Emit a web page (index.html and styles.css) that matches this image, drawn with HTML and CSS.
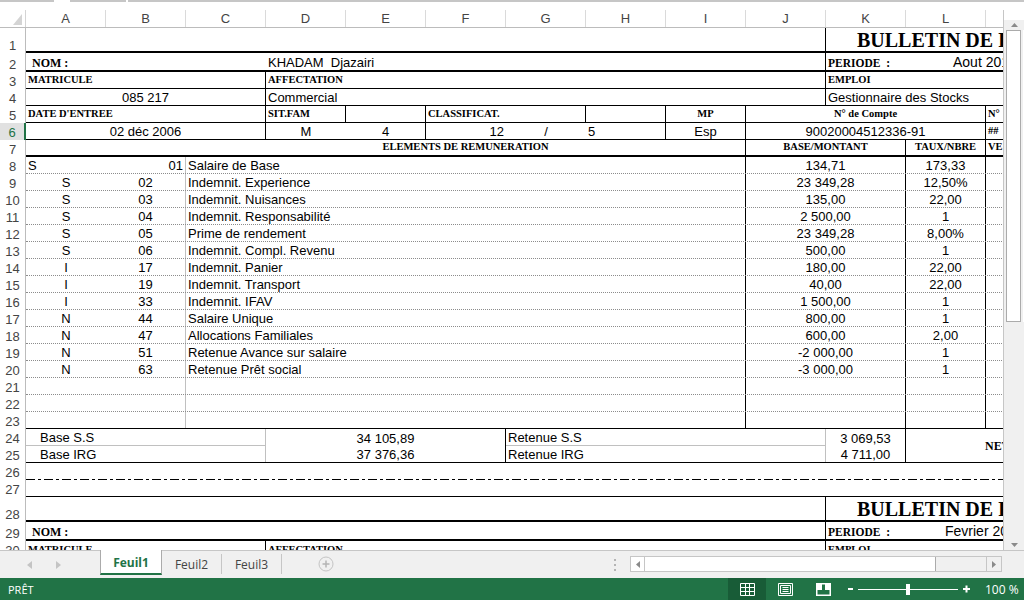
FILE: index.html
```
<!DOCTYPE html>
<html lang="fr">
<head>
<meta charset="UTF-8">
<title>Bulletin de paie - Feuil1</title>
<link rel="stylesheet" href="styles.css">
</head>
<body>
<div class="topbar"><span class="seg s-a"></span><span class="seg s-b"></span><span class="seg s-c"></span></div>

<div class="main">
  <div class="sheet">
    <div class="colhead">
      <div class="corner"><svg width="9" height="11" viewBox="0 0 9 11"><path d="M9 0V11H0z" fill="#d4d4d4"/></svg></div>
      <div class="ch">A</div><div class="ch">B</div><div class="ch">C</div><div class="ch">D</div>
      <div class="ch">E</div><div class="ch">F</div><div class="ch">G</div><div class="ch">H</div>
      <div class="ch">I</div><div class="ch">J</div><div class="ch">K</div><div class="ch">L</div>
      <div class="ch"></div>
    </div>

    <div class="row h25"><div class="rh">1</div><div class="cells bb2"><div class="c s10 br"></div><div class="c s3 title">BULLETIN DE PAIE</div></div></div>
    <div class="row h19"><div class="rh">2</div><div class="cells bb2"><div class="c s3 lbl nom">NOM :</div><div class="c s7 br">KHADAM  Djazairi</div><div class="c lb per">PERIODE  :</div><div class="c s2 big mois">Aout 2016</div></div></div>
    <div class="row"><div class="rh">3</div><div class="cells bb1"><div class="c s3 lb br">MATRICULE</div><div class="c s7 lb br">AFFECTATION</div><div class="c s3 lb">EMPLOI</div></div></div>
    <div class="row"><div class="rh">4</div><div class="cells bb1"><div class="c s3 br ctr">085 217</div><div class="c s7 br">Commercial</div><div class="c s3">Gestionnaire des Stocks</div></div></div>
    <div class="row"><div class="rh">5</div><div class="cells bb1"><div class="c s3 lb br">DATE D'ENTREE</div><div class="c lb br">SIT.FAM</div><div class="c br"></div><div class="c s2 lb br">CLASSIFICAT.</div><div class="c br"></div><div class="c lb br ctr">MP</div><div class="c s3 lb br ctr">N° de Compte</div><div class="c lb">N°</div></div></div>
    <div class="row"><div class="rh sel">6</div><div class="cells bb1"><div class="c s3 br ctr">02 déc 2006</div><div class="c ctr">M</div><div class="c br ctr">4</div><div class="c rt">12</div><div class="c ctr">/</div><div class="c br">5</div><div class="c br ctr">Esp</div><div class="c s3 br ctr">90020004512336-91</div><div class="c lb">##</div></div></div>
    <div class="row"><div class="rh">7</div><div class="cells bb2"><div class="c s2"></div><div class="c s7 lb br ctr">ELEMENTS DE REMUNERATION</div><div class="c s2 lb br ctr">BASE/MONTANT</div><div class="c lb br ctr">TAUX/NBRE</div><div class="c lb">VE</div></div></div>

    <div class="row"><div class="rh">8</div><div class="cells bbd"><div class="c">S</div><div class="c brg rt">01</div><div class="c s7 br">Salaire de Base</div><div class="c s2 br ctr">134,71</div><div class="c br ctr">173,33</div><div class="c"></div></div></div>
    <div class="row"><div class="rh">9</div><div class="cells bbd"><div class="c ctr">S</div><div class="c brg ctr">02</div><div class="c s7 br">Indemnit. Experience</div><div class="c s2 br ctr">23 349,28</div><div class="c br ctr">12,50%</div><div class="c"></div></div></div>
    <div class="row"><div class="rh">10</div><div class="cells bbd"><div class="c ctr">S</div><div class="c brg ctr">03</div><div class="c s7 br">Indemnit. Nuisances</div><div class="c s2 br ctr">135,00</div><div class="c br ctr">22,00</div><div class="c"></div></div></div>
    <div class="row"><div class="rh">11</div><div class="cells bbd"><div class="c ctr">S</div><div class="c brg ctr">04</div><div class="c s7 br">Indemnit. Responsabilité</div><div class="c s2 br ctr">2 500,00</div><div class="c br ctr">1</div><div class="c"></div></div></div>
    <div class="row"><div class="rh">12</div><div class="cells bbd"><div class="c ctr">S</div><div class="c brg ctr">05</div><div class="c s7 br">Prime de rendement</div><div class="c s2 br ctr">23 349,28</div><div class="c br ctr">8,00%</div><div class="c"></div></div></div>
    <div class="row"><div class="rh">13</div><div class="cells bbd"><div class="c ctr">S</div><div class="c brg ctr">06</div><div class="c s7 br">Indemnit. Compl. Revenu</div><div class="c s2 br ctr">500,00</div><div class="c br ctr">1</div><div class="c"></div></div></div>
    <div class="row"><div class="rh">14</div><div class="cells bbd"><div class="c ctr">I</div><div class="c brg ctr">17</div><div class="c s7 br">Indemnit. Panier</div><div class="c s2 br ctr">180,00</div><div class="c br ctr">22,00</div><div class="c"></div></div></div>
    <div class="row"><div class="rh">15</div><div class="cells bbd"><div class="c ctr">I</div><div class="c brg ctr">19</div><div class="c s7 br">Indemnit. Transport</div><div class="c s2 br ctr">40,00</div><div class="c br ctr">22,00</div><div class="c"></div></div></div>
    <div class="row"><div class="rh">16</div><div class="cells bbd"><div class="c ctr">I</div><div class="c brg ctr">33</div><div class="c s7 br">Indemnit. IFAV</div><div class="c s2 br ctr">1 500,00</div><div class="c br ctr">1</div><div class="c"></div></div></div>
    <div class="row"><div class="rh">17</div><div class="cells bbd"><div class="c ctr">N</div><div class="c brg ctr">44</div><div class="c s7 br">Salaire Unique</div><div class="c s2 br ctr">800,00</div><div class="c br ctr">1</div><div class="c"></div></div></div>
    <div class="row"><div class="rh">18</div><div class="cells bbd"><div class="c ctr">N</div><div class="c brg ctr">47</div><div class="c s7 br">Allocations Familiales</div><div class="c s2 br ctr">600,00</div><div class="c br ctr">2,00</div><div class="c"></div></div></div>
    <div class="row"><div class="rh">19</div><div class="cells bbd"><div class="c ctr">N</div><div class="c brg ctr">51</div><div class="c s7 br">Retenue Avance sur salaire</div><div class="c s2 br ctr">-2 000,00</div><div class="c br ctr">1</div><div class="c"></div></div></div>
    <div class="row"><div class="rh">20</div><div class="cells bbd"><div class="c ctr">N</div><div class="c brg ctr">63</div><div class="c s7 br">Retenue Prêt social</div><div class="c s2 br ctr">-3 000,00</div><div class="c br ctr">1</div><div class="c"></div></div></div>
    <div class="row"><div class="rh">21</div><div class="cells bbd"><div class="c"></div><div class="c brg"></div><div class="c s7 br"></div><div class="c s2 br"></div><div class="c br"></div><div class="c"></div></div></div>
    <div class="row"><div class="rh">22</div><div class="cells bbd"><div class="c"></div><div class="c brg"></div><div class="c s7 br"></div><div class="c s2 br"></div><div class="c br"></div><div class="c"></div></div></div>
    <div class="row"><div class="rh">23</div><div class="cells bb1"><div class="c"></div><div class="c brg"></div><div class="c s7 br"></div><div class="c s2 br"></div><div class="c br"></div><div class="c"></div></div></div>

    <div class="row h34">
      <div class="rhs"><div class="rh">24</div><div class="rh">25</div></div>
      <div class="cells two bb1">
        <div class="c s3 brg bbg ind">Base S.S</div>
        <div class="c s3 br ctr">34 105,89</div>
        <div class="c s4 brg bbg">Retenue S.S</div>
        <div class="c br ctr">3 069,53</div>
        <div class="c s2 r2 lbl net">NET A PAYER</div>
        <div class="c s3 brg ind">Base IRG</div>
        <div class="c s3 br ctr">37 376,36</div>
        <div class="c s4 brg">Retenue IRG</div>
        <div class="c br ctr">4 711,00</div>
      </div>
    </div>

    <div class="row"><div class="rh">26</div><div class="cells dashdot"></div></div>
    <div class="row"><div class="rh">27</div><div class="cells bb1"></div></div>
    <div class="row h25"><div class="rh">28</div><div class="cells bb2"><div class="c s10 br"></div><div class="c s3 title">BULLETIN DE PAIE</div></div></div>
    <div class="row h19"><div class="rh">29</div><div class="cells bb2"><div class="c s3 lbl nom">NOM :</div><div class="c s7 br"></div><div class="c lb per">PERIODE  :</div><div class="c s2 big feb">Fevrier 2016</div></div></div>
    <div class="row"><div class="rh">30</div><div class="cells"><div class="c s3 lb br">MATRICULE</div><div class="c s7 lb br">AFFECTATION</div><div class="c s3 lb">EMPLOI</div></div></div>
  </div>

  <div class="vscroll">
    <div class="vbtn"><svg width="7" height="4" viewBox="0 0 7 4"><path d="M0 4L3.5 0 7 4z" fill="#8a8a8a"/></svg></div>
    <div class="vthumb"></div>
    <div class="vtrack"></div>
    <div class="vbtn"><svg width="7" height="4" viewBox="0 0 7 4"><path d="M0 0L3.5 4 7 0z" fill="#8a8a8a"/></svg></div>
  </div>
</div>

<div class="tabs">
  <div class="nav">
    <svg width="5" height="8" viewBox="0 0 5 8"><path d="M5 0V8L0 4z" fill="#c4c4c4"/></svg>
    <svg width="5" height="8" viewBox="0 0 5 8"><path d="M0 0V8L5 4z" fill="#c4c4c4"/></svg>
  </div>
  <div class="tab on">Feuil1</div>
  <div class="tab">Feuil2</div>
  <div class="tab">Feuil3</div>
  <div class="add"><svg width="16" height="16" viewBox="0 0 16 16"><circle cx="8" cy="8" r="7" fill="none" stroke="#c4c4c4"/><path d="M8 4.5v7M4.5 8h7" stroke="#b4b4b4" stroke-width="1.5"/></svg></div>
  <div class="split"><svg width="2" height="12" viewBox="0 0 2 12"><rect y="0" width="2" height="2" fill="#b4b4b4"/><rect y="5" width="2" height="2" fill="#b4b4b4"/><rect y="10" width="2" height="2" fill="#b4b4b4"/></svg></div>
  <div class="hscroll">
    <div class="hbtn first"><svg width="4" height="7" viewBox="0 0 4 7"><path d="M4 0V7L0 3.5z" fill="#8a8a8a"/></svg></div>
    <div class="hthumb"></div>
    <div class="htrack"></div>
    <div class="hbtn"><svg width="4" height="7" viewBox="0 0 4 7"><path d="M0 0V7L4 3.5z" fill="#8a8a8a"/></svg></div>
  </div>
</div>

<div class="status">
  <span class="ready">PRÊT</span>
  <div class="views">
    <span class="vw on"><svg width="15" height="13" viewBox="0 0 15 13"><path d="M0.5 0.5h14v12h-14zM5.5 0.5v12M9.5 0.5v12M0.5 4.5h14M0.5 8.5h14" fill="none" stroke="#fff"/></svg></span>
    <span class="vw"><svg width="15" height="13" viewBox="0 0 15 13"><path d="M0.5 0.5h14v12h-14zM2.5 2.5h10v8h-10zM4.5 4.5h6M4.5 6.5h6M4.5 8.5h6" fill="none" stroke="#fff"/></svg></span>
    <span class="vw"><svg width="15" height="13" viewBox="0 0 15 13"><path d="M0.75 0.75h13.5v11.5h-13.5z" fill="none" stroke="#fff" stroke-width="1.5"/><rect x="1" y="1" width="5" height="6" fill="#fff"/><rect x="9" y="1" width="5" height="6" fill="#fff"/></svg></span>
  </div>
  <svg class="zoomer" width="128" height="22" viewBox="0 0 128 22">
    <rect x="0" y="10" width="5" height="2" fill="#fff"/>
    <rect x="10" y="11" width="100" height="1" fill="#fff"/>
    <rect x="58" y="6" width="4" height="11" fill="#fff"/>
    <rect x="115" y="10" width="7" height="2" fill="#fff"/>
    <rect x="117.5" y="7.5" width="2" height="7" fill="#fff"/>
  </svg>
  <span class="pct">100 %</span>
</div>
</body>
</html>
```

FILE: styles.css
```
* {
    margin: 0;
    padding: 0;
    box-sizing: border-box;
}
body {
    width: 1024px;
    height: 600px;
    overflow: hidden;
    background: #fff;
    font-family: "Liberation Sans", Arial, sans-serif;
    font-size: 13px;
    color: #000;
}

/* restes de la barre de formule */
.topbar {
    height: 10px;
    display: flex;
    align-items: flex-start;
}
.seg {
    height: 2px;
    background: #c6c6c6;
}
.s-a { width: 54px; }
.s-b { width: 56px; margin-left: 16px; }
.s-c { flex: 1; margin-left: 2px; }

.main {
    height: 540px;
    display: flex;
}
.sheet {
    width: 1003px;
    overflow: hidden;
}

/* en-tetes */
.colhead {
    display: grid;
    grid-template-columns: 26px repeat(12, 80px) 18px;
    height: 18px;
    border-bottom: 1px solid #bcbcbc;
    color: #444;
}
.corner {
    display: flex;
    align-items: flex-end;
    justify-content: flex-end;
    padding: 0 3px 2px 0;
    border-right: 1px solid #d4d4d4;
}
.ch {
    border-right: 1px solid #dadada;
    text-align: center;
    line-height: 17px;
}

.row {
    display: flex;
    height: 17px;
}
.h19 { height: 19px; }
.h25 { height: 25px; }
.h34 { height: 34px; }
.rh {
    width: 26px;
    flex: none;
    border-right: 1px solid #bcbcbc;
    color: #444;
    display: flex;
    align-items: flex-end;
    justify-content: center;
    line-height: 15px;
}
.rh.sel {
    background: #e1e1e1;
    color: #217346;
    border-right: 2px solid #217346;
}
.rhs {
    flex: none;
    display: flex;
    flex-direction: column;
}
.rhs .rh { height: 17px; }

.cells {
    flex: 1;
    display: grid;
    grid-template-columns: repeat(12, 80px) 18px;
}
.cells.two { grid-template-rows: 17px 16px; }
.bb1 { border-bottom: 1px solid #000; }
.bb2 { border-bottom: 2px solid #000; }
.bbd { border-bottom: 1px dotted #8c8c8c; }
.dashdot {
    background: repeating-linear-gradient(90deg, #000 0 9px, transparent 9px 12px, #000 12px 15px, transparent 15px 18px) left bottom / 100% 1px no-repeat;
}

/* cellules */
.c {
    display: flex;
    align-items: flex-end;
    padding: 0 2px;
    line-height: 15px;
    white-space: pre;
}
.s2 { grid-column: span 2; }
.s3 { grid-column: span 3; }
.s4 { grid-column: span 4; }
.s7 { grid-column: span 7; }
.s10 { grid-column: span 10; }
.r2 { grid-row: span 2; }
.ctr { justify-content: center; }
.rt { justify-content: flex-end; }
.br { border-right: 1px solid #000; }
.brg { border-right: 1px solid #c0c0c0; }
.bbg { border-bottom: 1px solid #c0c0c0; }
.ind { padding-left: 14px; }

.lb {
    font-family: "Liberation Serif", "Times New Roman", serif;
    font-weight: bold;
    font-size: 10.5px;
    line-height: 12px;
    padding-bottom: 2px;
}
.lbl {
    font-family: "Liberation Serif", "Times New Roman", serif;
    font-weight: bold;
    font-size: 12px;
    line-height: 14px;
}
.title {
    font-family: "Liberation Serif", "Times New Roman", serif;
    font-weight: bold;
    font-size: 20px;
    line-height: 22px;
    padding-left: 31px;
}
.nom { padding-left: 6px; }
.per {
    font-size: 11.5px;
    line-height: 14px;
    padding-bottom: 0;
}
.big {
    font-size: 14px;
    line-height: 16px;
}
.mois { padding-left: 47px; }
.feb { padding-left: 39px; }
.net {
    align-items: center;
    padding-left: 79px;
}

/* ascenseur vertical */
.vscroll {
    flex: 1;
    display: flex;
    flex-direction: column;
    padding-top: 10px;
    border-left: 1px solid #c6c6c6;
}
.vbtn {
    height: 10px;
    display: flex;
    align-items: center;
    justify-content: center;
    background: #f0f0f0;
}
.vthumb {
    height: 292px;
    background: #fff;
    border: 1px solid #ababab;
    box-shadow: 0 0 0 2px #f0f0f0;
    margin: 0 3px 0 2px;
}
.vtrack {
    flex: 1;
    background: #f0f0f0;
}

/* onglets */
.tabs {
    height: 28px;
    display: flex;
    align-items: flex-start;
    background: #f0f0f0;
    border-top: 1px solid #c6c6c6;
    font-family: "Open Sans", "Noto Sans", sans-serif;
    font-size: 12px;
    color: #444;
}
.nav {
    width: 100px;
    height: 27px;
    display: flex;
    align-items: center;
    gap: 24px;
    padding-left: 27px;
}
.tab {
    width: 60px;
    height: 20px;
    margin-top: 3px;
    display: flex;
    align-items: center;
    justify-content: center;
    border-right: 1px solid #c6c6c6;
}
.tab.on {
    width: 62px;
    height: 25px;
    margin-top: -1px;
    background: #fff;
    border-left: 1px solid #ababab;
    border-right: 1px solid #ababab;
    border-bottom: 2px solid #217346;
    color: #217346;
    font-weight: bold;
    padding-top: 1px;
}
.add {
    margin: 5px 0 0 36px;
    height: 16px;
}
.split {
    margin: 7px 0 0 280px;
    height: 12px;
}
.hscroll {
    width: 372px;
    height: 16px;
    margin: 5px 0 0 14px;
    display: flex;
    border: 1px solid #c6c6c6;
    background: #f0f0f0;
}
.hbtn {
    width: 14px;
    display: flex;
    align-items: center;
    justify-content: center;
}
.hbtn.first {
    background: #fff;
    border-right: 1px solid #c6c6c6;
}
.hthumb {
    width: 291px;
    background: #fff;
    border-right: 1px solid #ababab;
}
.htrack {
    flex: 1;
    border-right: 1px solid #c6c6c6;
}

/* barre d'etat */
.status {
    height: 22px;
    display: flex;
    align-items: center;
    background: #217346;
    color: #fff;
    font-family: "Open Sans", "Noto Sans", sans-serif;
    font-size: 11px;
}
.ready { padding-left: 8px; }
.views {
    margin-left: auto;
    display: flex;
    height: 22px;
}
.vw {
    width: 38px;
    display: flex;
    align-items: center;
    justify-content: center;
}
.vw.on { background: #185c37; }
.zoomer { margin-left: 6px; }
.pct {
    width: 39px;
    margin-left: 9px;
    font-size: 12px;
}
```
